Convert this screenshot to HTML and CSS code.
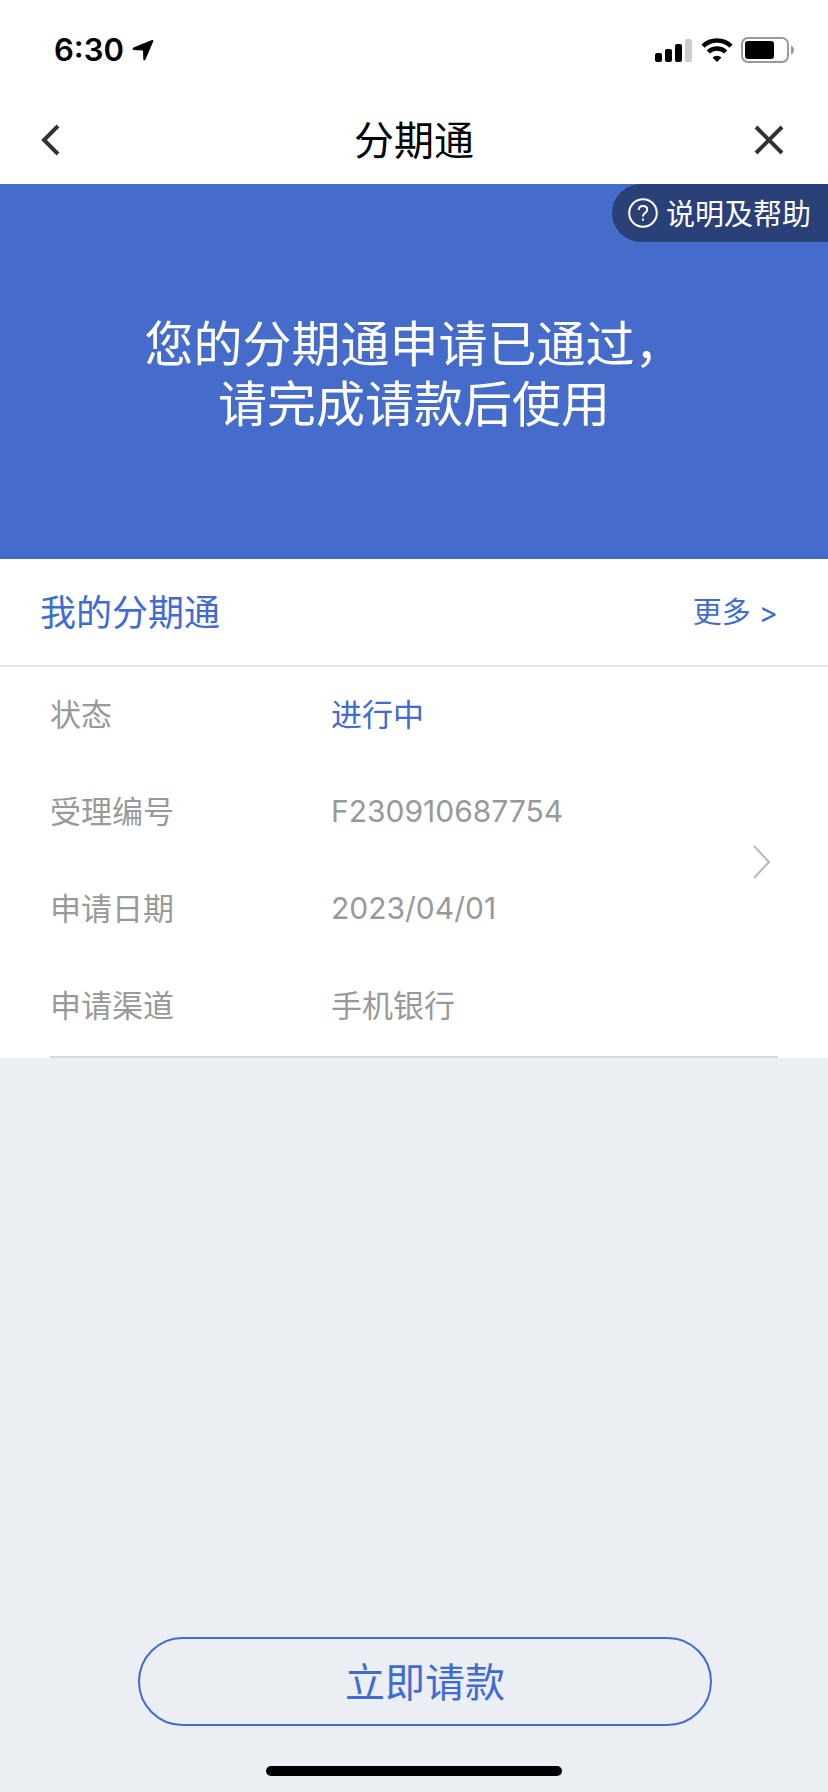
FILE: index.html
```html
<!DOCTYPE html>
<html lang="zh-CN">
<head>
  <meta charset="UTF-8" />
  <meta name="viewport" content="width=device-width, initial-scale=1.0"/>
  <title>分期通</title>
  <link rel="stylesheet" href="styles.css">
</head>
<body>
  <div class="status-bar">
    <div class="status-left">
      <span class="time">6:30</span>
      <svg width="22" height="22" viewBox="0 0 22 22">
        <path d="M20 1 Q21.800 0.500 21.200 2.500 L13.500 20.500 Q12 22.500 11.300 20.500 L11 11.500 L1.500 11 Q-0.500 10 1.500 8.500 Z" fill="#000"/>
      </svg>
    </div>
    <div class="status-right">
      <svg width="38" height="24" viewBox="0 0 38 24">
        <rect x="0" y="15" width="7" height="9" rx="2"/>
        <rect x="10" y="11" width="7" height="13" rx="2"/>
        <rect x="20" y="6" width="7" height="18" rx="2"/>
        <rect x="30" y="1" width="7" height="23" rx="2" fill="#ccc"/>
      </svg>
      <svg width="32" height="24" viewBox="0 0 32 24">
        <path d="M2 8.200 A20 20 0 0 1 30 8.200" fill="none" stroke="#000" stroke-width="4.600"/>
        <path d="M7.300 14 A12.500 12.500 0 0 1 24.700 14" fill="none" stroke="#000" stroke-width="4.400"/>
        <path d="M16 24 L11.500 19.500 A6.500 6.500 0 0 1 20.500 19.500 Z"/>
      </svg>
      <svg width="54" height="26" viewBox="0 0 54 26">
        <rect x="1" y="1" width="46" height="24" rx="6" fill="none" stroke="#999" stroke-width="2"/>
        <rect x="4" y="4" width="29" height="18" rx="3"/>
        <path d="M50 8.500 Q53 10 53 13 Q53 16 50 17.500 Z" fill="#999"/>
      </svg>
    </div>
  </div>

  <header class="nav">
    <button type="button" class="nav-btn" aria-label="返回">
      <svg width="30" height="32" viewBox="0 0 30 32">
        <path d="M18 2 L4 16 L18 30" fill="none" stroke="#333" stroke-width="4"/>
      </svg>
    </button>
    <h1>分期通</h1>
    <button type="button" class="nav-btn" aria-label="关闭">
      <svg width="30" height="30" viewBox="0 0 30 30">
        <path d="M2 2 L28 28 M28 2 L2 28" fill="none" stroke="#333" stroke-width="4"/>
      </svg>
    </button>
  </header>

  <section class="banner">
    <a href="#" class="help">
      <svg width="30" height="30" viewBox="0 0 30 30" fill="none" stroke="#fff" stroke-width="2">
        <circle cx="15" cy="15" r="13.800"/>
        <path d="M10.800 12 Q10.800 8 15 8 Q19.200 8 19.200 11.500 Q19.200 13.500 17 15 Q15 16.500 15 18.500"/>
        <path d="M15 20.500 L15 22.700"/>
      </svg>
      <span>说明及帮助</span>
    </a>
    <p>您的分期通申请已通过，<br>请完成请款后使用</p>
  </section>

  <main class="card">
    <div class="card-head">
      <h2>我的分期通</h2>
      <a href="#">更多 &gt;</a>
    </div>
    <a href="#" class="record">
      <dl>
        <div class="row"><dt>状态</dt><dd class="active">进行中</dd></div>
        <div class="row"><dt>受理编号</dt><dd class="num">F230910687754</dd></div>
        <div class="row"><dt>申请日期</dt><dd class="num">2023/04/01</dd></div>
        <div class="row"><dt>申请渠道</dt><dd>手机银行</dd></div>
      </dl>
      <svg width="18" height="34" viewBox="0 0 18 34">
        <path d="M1 1 L16 17 L1 33" fill="none" stroke="#b8b8b8" stroke-width="2"/>
      </svg>
    </a>
  </main>

  <footer class="bottom">
    <button type="button" class="submit-btn">立即请款</button>
  </footer>
  <div class="home-bar"></div>
</body>
</html>
```

FILE: styles.css
```css
* {
  box-sizing: border-box;
}

body {
  margin: 0;
  min-height: 100vh;
  display: flex;
  flex-direction: column;
  background: #ebeff4;
  font-family: Inter, 'Noto Sans CJK SC', sans-serif;
  color: #000;
}

h1, h2, p, dl, dd {
  margin: 0;
  font-weight: inherit;
}

a {
  text-decoration: none;
}

button {
  font: inherit;
  background: none;
  border: none;
  padding: 0;
  cursor: pointer;
}

svg {
  display: block;
}

/* status bar */
.status-bar {
  height: 96px;
  padding: 3px 33px 0 54px;
  background: #fff;
  display: flex;
  justify-content: space-between;
  align-items: center;
}

.status-left,
.status-right {
  display: flex;
  align-items: center;
  gap: 8px;
}

.time {
  font-size: 31px;
  font-weight: 600;
}

/* title bar */
.nav {
  height: 88px;
  padding: 0 44px 0 40px;
  background: #fff;
  display: flex;
  justify-content: space-between;
  align-items: center;
}

.nav h1 {
  padding: 2px 0 0 4px;
  font-size: 40px;
  line-height: 48px;
}

/* blue banner */
.banner {
  position: relative;
  height: 375px;
  padding-top: 131px;
  background: #466ccb;
  color: #fff;
  text-align: center;
}

.banner p {
  font-size: 49px;
  line-height: 60px;
}

.help {
  position: absolute;
  top: 0;
  right: 0;
  height: 58px;
  padding: 0 17px 0 16px;
  display: flex;
  align-items: center;
  gap: 8px;
  border-radius: 29px 0 0 29px;
  background: #2a4178;
  color: #fff;
  font-size: 29px;
}

.help span {
  padding-bottom: 3px;
}

/* record card */
.card {
  background: #fff;
}

.card-head {
  height: 108px;
  padding: 0 50px 4px 40px;
  border-bottom: 2px solid #e6e6e6;
  display: flex;
  justify-content: space-between;
  align-items: center;
  color: #416bd3;
}

.card-head h2 {
  font-size: 36px;
}

.card-head a {
  color: inherit;
  font-size: 29px;
}

.record {
  margin: 0 50px;
  padding: 1px 7px 0 0;
  border-bottom: 2px solid #d9d9d9;
  display: flex;
  justify-content: space-between;
  align-items: center;
  color: #999;
  font-size: 31px;
}

.row {
  height: 97px;
  padding-bottom: 8px;
  display: flex;
  align-items: center;
}

.row dt {
  width: 281px;
}

.row .active {
  color: #416bd3;
}

.row .num {
  padding-top: 2px;
  font-size: 30px;
}

/* bottom action */
.bottom {
  margin-top: auto;
  padding: 0 116px 40px 138px;
}

.submit-btn {
  width: 100%;
  height: 89px;
  padding-bottom: 4px;
  border: 2px solid #416bd3;
  border-radius: 45px;
  color: #416bd3;
  font-size: 40px;
}

.home-bar {
  width: 296px;
  height: 10px;
  margin: 0 auto 16px;
  border-radius: 5px;
  background: #000;
}
```
